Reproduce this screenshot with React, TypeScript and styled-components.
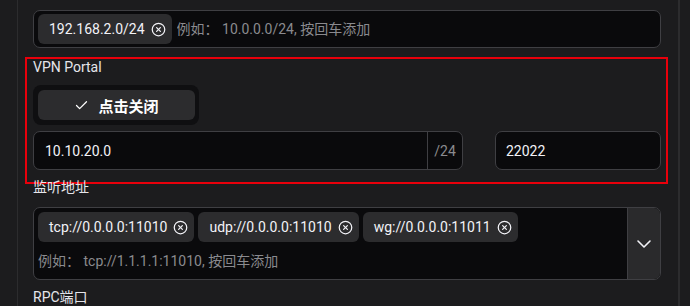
import React from "react";
import styled, { createGlobalStyle } from "styled-components";
import { Check, CircleX, ChevronDown } from "lucide-react";

const GlobalStyle = createGlobalStyle`
  html, body { margin: 0; padding: 0; background: #1c1c1e; }
  body {
    font-family: Roboto, "Noto Sans CJK SC", sans-serif;
    color: #f2f2f7;
    -webkit-font-smoothing: antialiased;
  }
  * { box-sizing: border-box; }
`;

const Page = styled.div`
  height: 306px;
  overflow: hidden;
  display: flex;
  align-items: flex-start;
`;

const Panel = styled.div`
  margin-left: 17px;
  width: 663px;
  height: 306px;
  border-left: 1px solid #2c2c2e;
  border-right: 2px solid #2c2c2e;
  padding: 10px 17px 0 15px;
  display: flex;
  flex-direction: column;
  & > * { flex-shrink: 0; }
`;

const Field = styled.section<{ $top?: number }>`
  position: relative;
  display: flex;
  flex-direction: column;
  margin-top: ${(p) => p.$top ?? 0}px;
  & > * { flex-shrink: 0; }
`;

const Label = styled.div<{ $gap?: number }>`
  font-size: 14px;
  line-height: 20px;
  height: 20px;
  color: #e5e5ea;
  margin-bottom: ${(p) => p.$gap ?? 8}px;
`;

const Highlight = styled.div`
  position: absolute;
  top: 0;
  left: -8px;
  right: -7px;
  bottom: -14px;
  border: 2px solid #e8000b;
  pointer-events: none;
`;

const TagBox = styled.div`
  display: flex;
  align-items: center;
  gap: 5px;
  height: 38px;
  padding: 0 4px;
  background: #0a0a0c;
  border: 1px solid #3f3f43;
  border-radius: 7px;
`;

const Tag = styled.span`
  display: inline-flex;
  align-items: center;
  gap: 6px;
  height: 30px;
  padding: 0 6px 0 11px;
  background: #2c2c2e;
  border-radius: 6px;
  font-size: 14px;
  color: #f2f2f7;
  white-space: nowrap;
  flex-shrink: 0;
`;

const TextInput = styled.input`
  flex: 1;
  min-width: 0;
  border: none;
  outline: none;
  background: transparent;
  font: inherit;
  font-size: 14px;
  color: #f2f2f7;
  padding: 0;
  &::placeholder { color: #8a8a8f; }
`;

const PlaceholderInput = styled(TextInput)`
  height: 30px;
  flex: none;
  width: 100%;
`;

const ToggleGroup = styled.div`
  display: flex;
  width: 166px;
  height: 40px;
  padding: 5px 4px 5px 5px;
  background: #0f0f11;
  border-radius: 8px;
`;

const ToggleButton = styled.button`
  flex: 1;
  display: flex;
  align-items: center;
  justify-content: center;
  gap: 9px;
  border: none;
  border-radius: 6px;
  background: #2c2c2e;
  color: #ffffff;
  font-family: inherit;
  font-size: 15px;
  font-weight: 600;
  padding: 0;
`;

const Row = styled.div`
  display: grid;
  grid-template-columns: 430px 1fr;
  gap: 32px;
  margin-top: 6px;
`;

const InputGroup = styled.div`
  display: flex;
  height: 39px;
  background: #0a0a0c;
  border: 1px solid #3f3f43;
  border-radius: 7px;
  overflow: hidden;
`;

const GroupInput = styled(TextInput)<{ $pad?: number }>`
  padding: 0 ${(p) => p.$pad ?? 11}px;
`;

const Addon = styled.div`
  width: 35px;
  display: flex;
  align-items: center;
  justify-content: center;
  border-left: 1px solid #3f3f43;
  color: #8a8a8f;
  font-size: 14px;
`;

const ListenerBox = styled.div`
  display: flex;
  height: 73px;
  background: #0a0a0c;
  border: 1px solid #3f3f43;
  border-radius: 7px;
  overflow: hidden;
`;

const ListenerBody = styled.div`
  flex: 1;
  min-width: 0;
  display: flex;
  flex-direction: column;
  gap: 4px;
  padding: 4px 4px 3px;
`;

const TagRow = styled.div`
  display: flex;
  gap: 4px;
`;

const DropButton = styled.button`
  width: 33px;
  border: none;
  border-left: 1px solid #3f3f43;
  background: #2a2a2c;
  color: #f2f2f7;
  display: flex;
  align-items: center;
  justify-content: center;
  padding: 0;
`;

const listeners = ["tcp://0.0.0.0:11010", "udp://0.0.0.0:11010", "wg://0.0.0.0:11011"];

const RemovableTag = ({ text }: { text: string }) => (
  <Tag>
    {text}
    <CircleX size={15} strokeWidth={2} />
  </Tag>
);

export default function App() {
  return (
    <>
      <GlobalStyle />
      <Page>
        <Panel>
          <TagBox>
            <RemovableTag text="192.168.2.0/24" />
            <TextInput placeholder="例如： 10.0.0.0/24, 按回车添加" />
          </TagBox>

          <Field $top={9}>
            <Highlight />
            <Label>VPN Portal</Label>
            <ToggleGroup>
              <ToggleButton>
                <Check size={15} strokeWidth={2} />
                点击关闭
              </ToggleButton>
            </ToggleGroup>
            <Row>
              <InputGroup>
                <GroupInput defaultValue="10.10.20.0" />
                <Addon>/24</Addon>
              </InputGroup>
              <InputGroup>
                <GroupInput defaultValue="22022" $pad={10} />
              </InputGroup>
            </Row>
          </Field>

          <Field $top={7}>
            <Label $gap={10}>监听地址</Label>
            <ListenerBox>
              <ListenerBody>
                <TagRow>
                  {listeners.map((l) => (
                    <RemovableTag key={l} text={l} />
                  ))}
                </TagRow>
                <PlaceholderInput placeholder="例如： tcp://1.1.1.1:11010, 按回车添加" />
              </ListenerBody>
              <DropButton>
                <ChevronDown size={24} strokeWidth={1.6} />
              </DropButton>
            </ListenerBox>
          </Field>

          <Field $top={7}>
            <Label>RPC端口</Label>
          </Field>
        </Panel>
      </Page>
    </>
  );
}
